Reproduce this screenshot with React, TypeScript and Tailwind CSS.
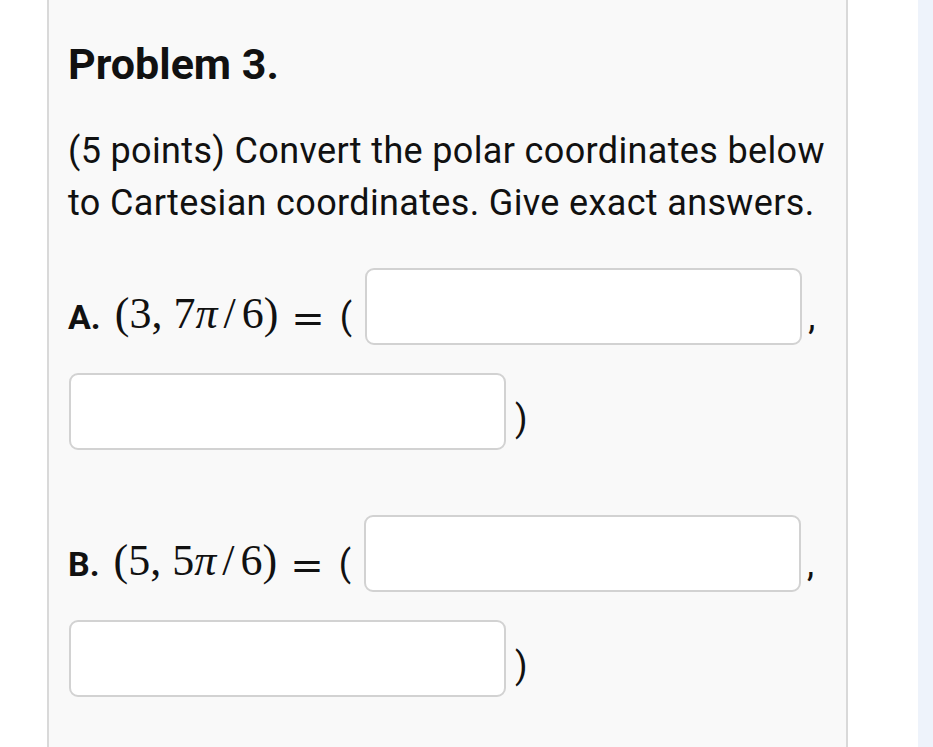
import React from "react";

const sans = { fontFamily: "Roboto, 'Liberation Sans', sans-serif" };

function Box() {
  return (
    <div className="w-[437px] h-[77px] shrink-0 bg-white border-2 border-[#d2d2d2] rounded-[9px]" />
  );
}

function Math({ r, n }: { r: string; n: string }) {
  return (
    <span className="font-['Liberation_Serif',serif] text-[44px] leading-none text-[#111] mb-[9px] whitespace-nowrap">
      (<span>{r}</span>,<span className="ml-[11px]">{n}</span>
      <i>π</i>
      <span className="mx-[6px]">/</span>6)
    </span>
  );
}

function Problem({ label, r, n, first }: { label: string; r: string; n: string; first: string }) {
  return (
    <div className={first}>
      <div className="flex items-end h-[77px]">
        <span className="font-bold text-[34px] leading-none mb-[11px]">{label}</span>
        <span className="ml-[14px] flex items-end">
          <Math r={r} n={n} />
        </span>
        <span className="ml-[13px] font-['DejaVu_Serif',serif] text-[40px] leading-none mb-[7px]">=</span>
        <span className="ml-[15px] text-[36px] leading-none mb-[10px]">(</span>
        <span className="ml-[13px]"><Box /></span>
        <span className="ml-[6px] text-[36px] leading-none mb-[10px]">,</span>
      </div>
      <div className="flex items-end h-[77px] mt-[28px]">
        <span className="ml-[1px]"><Box /></span>
        <span className="ml-[9px] text-[36px] leading-none mb-[13px]">)</span>
      </div>
    </div>
  );
}

export default function App() {
  return (
    <div className="min-h-[747px] h-[747px] bg-white flex overflow-hidden text-[#111]" style={sans}>
      <div className="w-[47px] shrink-0" />
      <div className="w-[801px] shrink-0 bg-[#f9f9f9] border-x-2 border-[#d9d9d9] pl-[19px] pr-[10px] pt-[38px]">
        <h2 className="font-bold text-[43px] leading-[52px]">Problem 3.</h2>
        <p className="mt-[35px] text-[36px] leading-[52px] tracking-[0.35px]">
          (5 points) Convert the polar coordinates below to Cartesian coordinates. Give exact answers.
        </p>
        <Problem label="A." r="3" n="7" first="mt-[39px]" />
        <Problem label="B." r="5" n="5" first="mt-[65px]" />
      </div>
      <div className="w-[70px] shrink-0" />
      <div className="flex-1 bg-[#eef3fb]" />
    </div>
  );
}
